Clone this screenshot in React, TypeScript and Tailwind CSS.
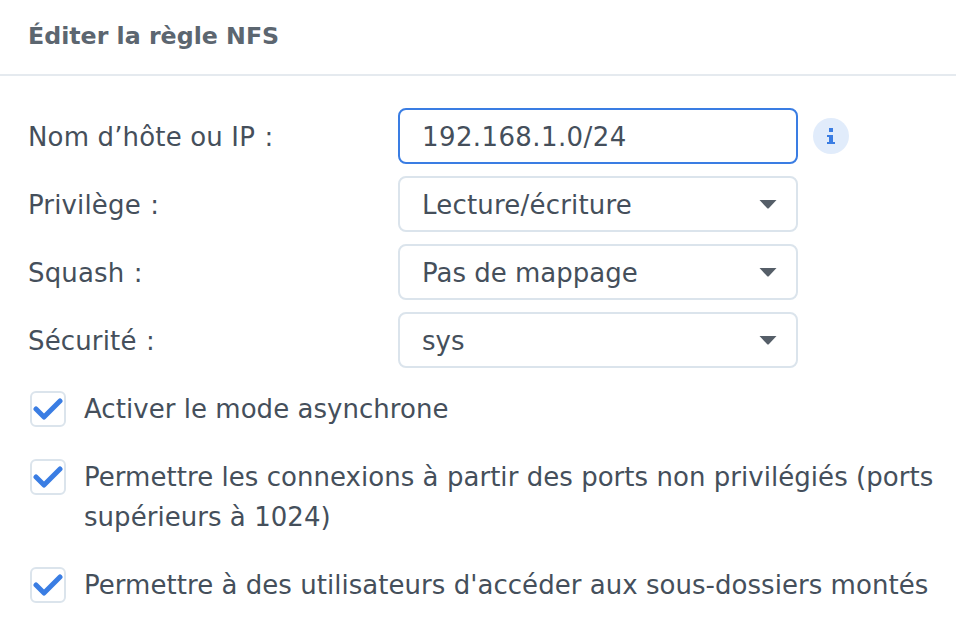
const font = { fontFamily: '"DejaVu Sans", sans-serif' }

function Check() {
  return (
    <span className="mt-[2px] ml-[2px] flex h-[36px] w-[36px] shrink-0 items-center justify-center rounded-[6px] border-2 border-[#dbe4ec] bg-white">
      <svg width="30" height="24" viewBox="0 0 30 24" fill="none">
        <path d="M3 12 L11 20 L27 4" stroke="#3a7de3" strokeWidth="5" strokeLinecap="round" strokeLinejoin="round" />
      </svg>
    </span>
  )
}

function FormRow({ label, value, valueClass, select, focus }: { label: string; value: string; valueClass?: string; select?: boolean; focus?: boolean }) {
  return (
    <div className="flex items-center">
      <div className="w-[370px] pt-[2px] text-[26px] tracking-[0.15px] text-[#454f5b]">
        {label} <span className="ml-[1px]">:</span>
      </div>
      <div
        className={
          focus
            ? 'flex h-[56px] w-[400px] items-center justify-between rounded-[8px] border-2 border-[#3a7de3] bg-white pl-[22px] pr-[19px]'
            : 'flex h-[56px] w-[400px] items-center justify-between rounded-[8px] border-2 border-[#dbe4ec] bg-white pl-[22px] pr-[19px]'
        }
      >
        <span className={'pt-[2px] text-[26px] text-[#454f5b] ' + (valueClass || '')}>{value}</span>
        {select && (
          <svg width="18" height="9" viewBox="0 0 18 9">
            <path d="M0.5 0 H17.5 L10 8 Q9 9 8 8 Z" fill="#555e68" />
          </svg>
        )}
      </div>
      {focus && (
        <span className="ml-[15px] flex h-[36px] w-[36px] items-center justify-center rounded-full bg-[#e1ecfb]">
          <svg width="10" height="18" viewBox="0 0 10 18" fill="#3a7de3">
            <rect x="3" y="1" width="4" height="4" />
            <path d="M1 8 H7 V15 H9 V17 H1 V15 H3 V10 H1 Z" />
          </svg>
        </span>
      )}
    </div>
  )
}

export default function App() {
  return (
    <div className="h-[626px] w-[956px] overflow-hidden bg-white" style={font}>
      {/* header */}
      <div className="flex h-[76px] items-center border-b-2 border-[#e5eaef] pl-[28px]">
        <h1 className="text-[23.7px] font-bold text-[#5c6670]">Éditer la règle NFS</h1>
      </div>

      <div className="pl-[28px] pt-[32px]">
        <div className="flex flex-col gap-[12px]">
          <FormRow label="Nom d’hôte ou IP" value="192.168.1.0/24" valueClass="tracking-[0.4px]" focus />
          <FormRow label="Privilège" value="Lecture/écriture" valueClass="tracking-[0.2px]" select />
          <FormRow label="Squash" value="Pas de mappage" select />
          <FormRow label="Sécurité" value="sys" select />
        </div>

        <div className="mt-[21px] flex flex-col gap-[28px] text-[26px] leading-[40px] tracking-[0.04px] text-[#454f5b]">
          <div className="flex gap-[18px]">
            <Check />
            <span>Activer le mode asynchrone</span>
          </div>
          <div className="flex gap-[18px]">
            <Check />
            <span className="w-[860px]">Permettre les connexions à partir des ports non privilégiés (ports supérieurs à 1024)</span>
          </div>
          <div className="flex gap-[18px]">
            <Check />
            <span className="whitespace-nowrap">Permettre à des utilisateurs d'accéder aux sous-dossiers montés</span>
          </div>
        </div>
      </div>
    </div>
  )
}
